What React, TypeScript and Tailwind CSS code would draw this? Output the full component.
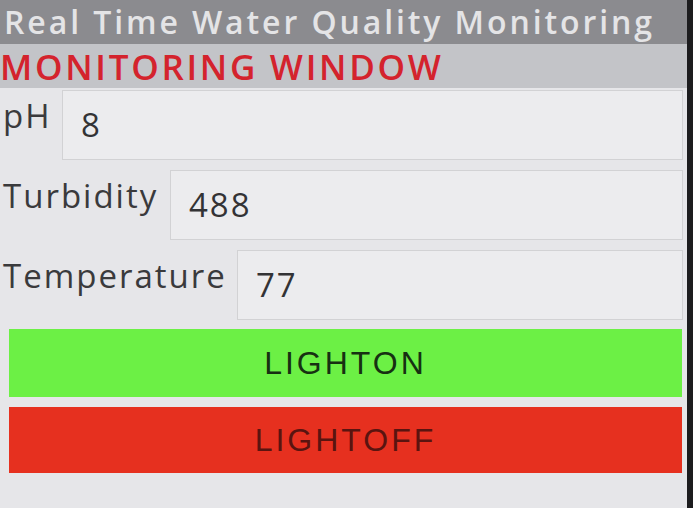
function Field({ label, value, labelW }: { label: string; value: string; labelW: string }) {
  return (
    <div className="flex items-start">
      <div className={`${labelW} shrink-0 pt-[9px] pl-[3px] text-[33px] leading-none tracking-[2px] text-[#3a3a3c]`}>
        {label}
      </div>
      <div className="flex h-[70px] flex-1 items-center border border-[#d2d2d4] bg-[#ececee] pl-[18px] text-[33px] tracking-[2px] text-[#333335]">
        {value}
      </div>
    </div>
  );
}

export default function App() {
  return (
    <div
      className="flex h-[508px] w-[693px] overflow-hidden bg-[#1c1c1e]"
      style={{ fontFamily: '"Open Sans", "Liberation Sans", sans-serif' }}
    >
      <div className="flex w-[687px] flex-col bg-[#e6e6e9]">
        <div className="h-[44px] whitespace-nowrap bg-[#8b8b8f] pl-[4px] text-[32px] font-semibold leading-[44px] tracking-[2.9px] text-[#e4e4e6]">
          Real Time Water Quality Monitoring
        </div>
        <div className="flex h-[44px] items-center bg-[#c3c4c8] text-[35px] font-semibold leading-none tracking-[2.7px] text-[#d4232d]">
          MONITORING WINDOW
        </div>

        <div className="flex flex-col gap-[10px] pt-[2px] pr-[4px]">
          <Field label="pH" value="8" labelW="w-[62px]" />
          <Field label="Turbidity" value="488" labelW="w-[170px]" />
          <Field label="Temperature" value="77" labelW="w-[237px]" />
        </div>

        <div
          className="mt-[9px] flex flex-col gap-[10px] pl-[9px] pr-[5px] text-[32px] tracking-[3px]"
          style={{ fontFamily: '"Liberation Sans", Arial, sans-serif' }}
        >
          <button className="flex h-[68px] items-center justify-center bg-[#6cf045] text-[#173012]">LIGHTON</button>
          <button className="flex h-[66px] items-center justify-center bg-[#e6301f] text-[#5a1410]">LIGHTOFF</button>
        </div>
      </div>
    </div>
  );
}
